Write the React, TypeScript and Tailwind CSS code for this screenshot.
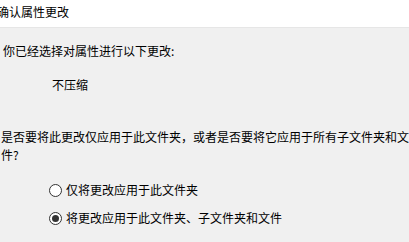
import React from "react";

const font = { fontFamily: '"Noto Sans CJK SC", "Noto Sans", sans-serif' };

function Radio({ checked }: { checked?: boolean }) {
  return (
    <span className="flex h-[13px] w-[13px] shrink-0 items-center justify-center rounded-full border border-[#333333] bg-white">
      {checked && <span className="h-[7px] w-[7px] rounded-full bg-[#333333]" />}
    </span>
  );
}

export default function App() {
  return (
    <div
      className="flex h-[242px] w-[409px] flex-col overflow-hidden bg-[#f0f0f0] text-[12px] leading-[18px] text-black"
      style={font}
    >
      <div className="h-[28px] shrink-0 border-b border-[#e6e6e6] bg-white pt-[3px]">
        <div className="ml-[-3px] whitespace-nowrap">确认属性更改</div>
      </div>
      <div className="flex flex-col">
        <div className="mt-[14px] pl-[3px] whitespace-nowrap">你已经选择对属性进行以下更改:</div>
        <div className="mt-[16px] pl-[52px] whitespace-nowrap">不压缩</div>
        <div className="mt-[34px] pl-[1px] whitespace-nowrap">
          是否要将此更改仅应用于此文件夹，或者是否要将它应用于所有子文件夹和文
          <br />
          件?
        </div>
        <div className="mt-[17px] flex items-center gap-[4px] pl-[49px] whitespace-nowrap">
          <Radio />
          <span>仅将更改应用于此文件夹</span>
        </div>
        <div className="mt-[10px] flex items-center gap-[4px] pl-[49px] whitespace-nowrap">
          <Radio checked />
          <span>将更改应用于此文件夹、子文件夹和文件</span>
        </div>
      </div>
    </div>
  );
}
